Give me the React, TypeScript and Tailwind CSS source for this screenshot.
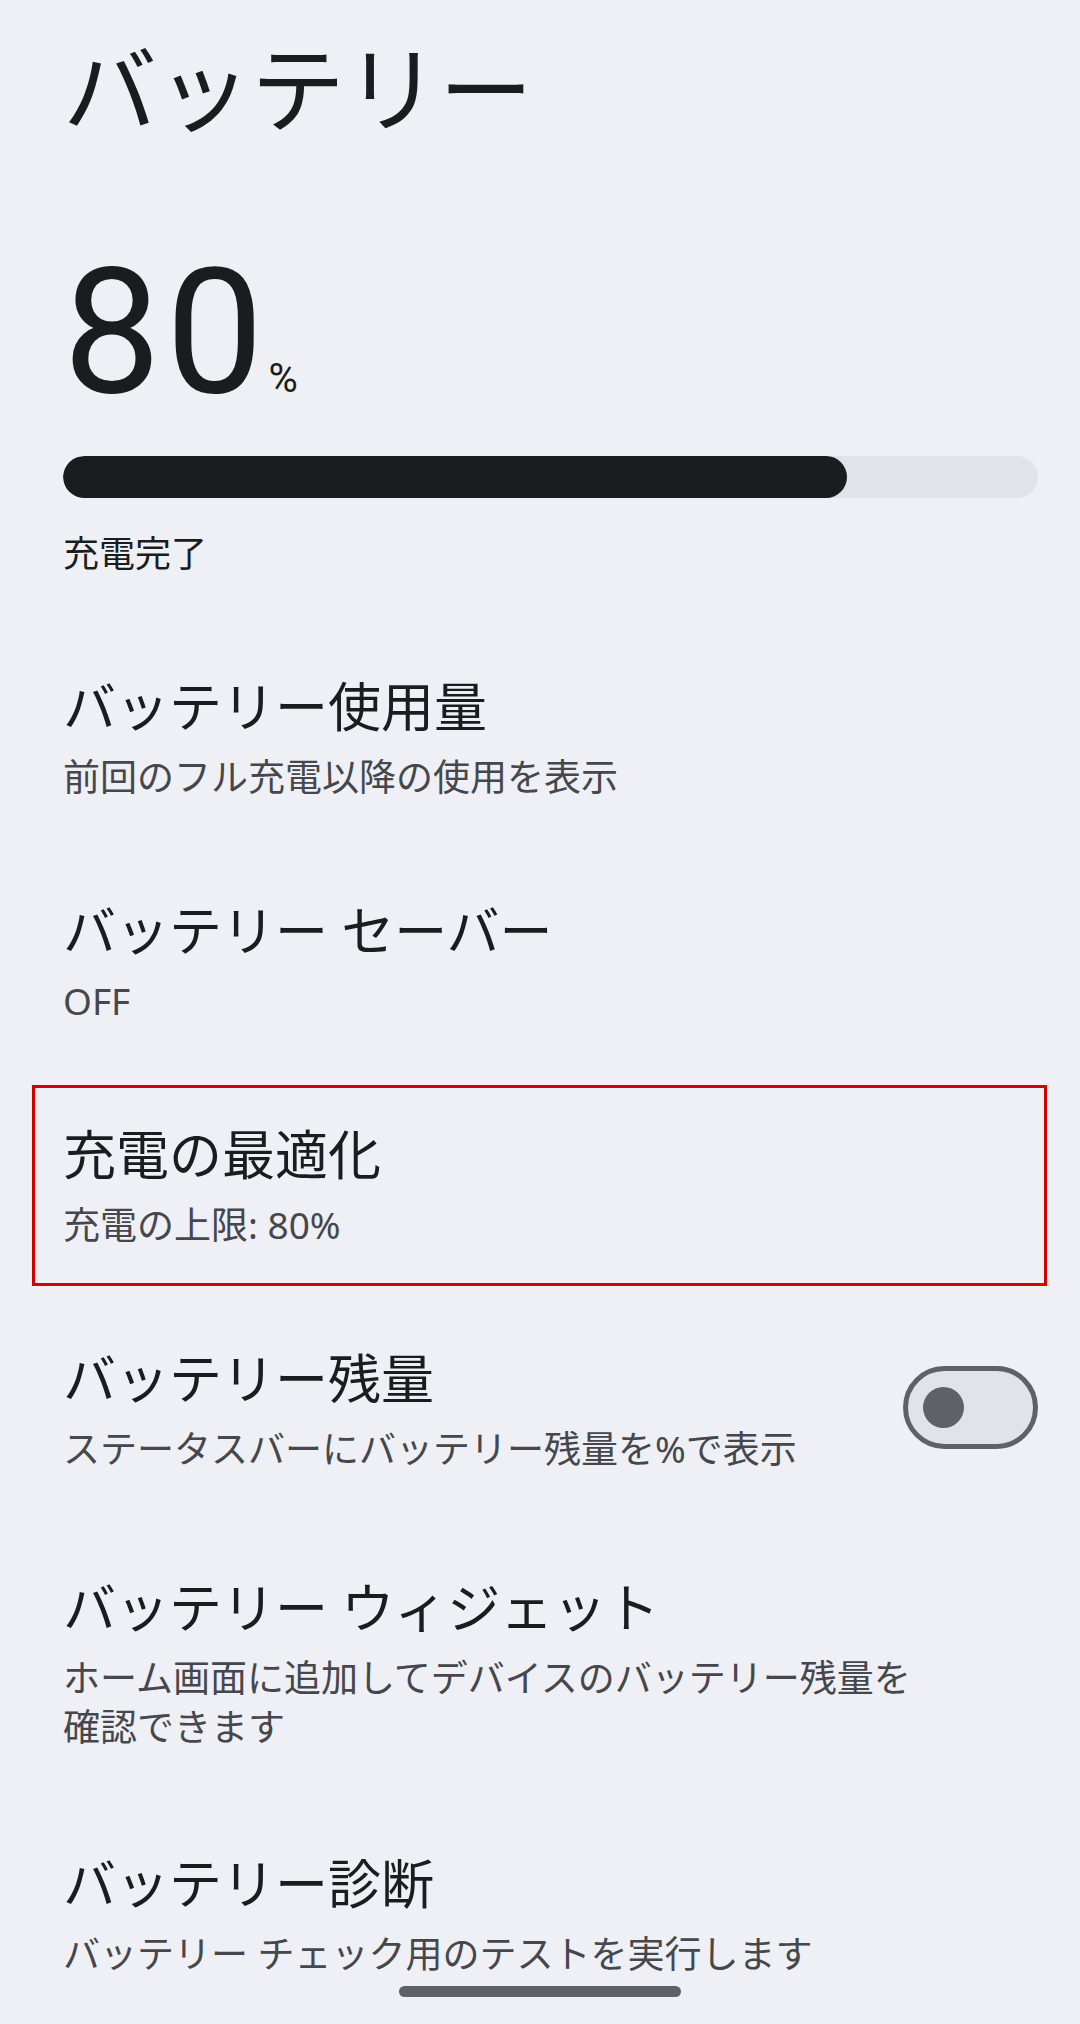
import React from "react";

const F = { fontFamily: '"Roboto", "Noto Sans CJK JP", sans-serif' };
const FN = { fontFamily: '"Noto Sans", "Noto Sans CJK JP", sans-serif' };

function Item({
  title,
  sub,
  right,
  extra = "",
}: {
  title: string;
  sub: React.ReactNode;
  right?: React.ReactNode;
  extra?: string;
}) {
  return (
    <div className={`flex items-center pl-[63px] pr-[42px] py-[47px] ${extra}`}>
      <div className="flex-1 min-w-0">
        <div className="text-[53px] leading-[70px] text-[#1b1c20]">{title}</div>
        <div className="mt-[8px] mb-[3px] text-[37px] leading-[49px] text-[#46474d]" style={FN}>
          {sub}
        </div>
      </div>
      {right}
    </div>
  );
}

export default function App() {
  return (
    <div
      className="relative w-[1080px] h-[2024px] overflow-hidden bg-[#eff0f5]"
      style={F}
    >
      <div className="pt-[46px] pl-[63px] text-[94px] leading-none text-[#1b1c20]">
        バッテリー
      </div>

      <div className="mt-[106px] pl-[63px] flex items-baseline text-[#1b1c20]">
        <span className="text-[174px] leading-none tracking-[5px]">80</span>
        <span className="ml-[0px] text-[40px] leading-none">%</span>
      </div>

      <div className="mt-[36px] ml-[63px] mr-[42px] h-[42px] rounded-full bg-[#e1e2ea] overflow-hidden">
        <div className="h-full w-[784px] rounded-full bg-[#1b1c20]" />
      </div>

      <div className="mt-[33px] pl-[63px] text-[36px] leading-[49px] text-[#1b1c20]">
        充電完了
      </div>

      <div className="mt-[47px]">
        <Item title="バッテリー使用量" sub="前回のフル充電以降の使用を表示" />
        <Item title="バッテリー セーバー" sub="OFF" />
        <div className="relative">
          <Item title="充電の最適化" sub="充電の上限: 80%" />
          <div className="absolute top-[10px] bottom-[13px] left-[32px] right-[33px] border-[3px] border-[#d40000]" />
        </div>
        <Item
          title="バッテリー残量"
          sub="ステータスバーにバッテリー残量を%で表示"
          extra="pb-[52px]"
          right={
            <div className="ml-[24px] mb-[8px] flex items-center w-[135px] h-[83px] rounded-full border-[5px] border-[#606167] bg-[#e1e2ea] pl-[15px]">
              <div className="w-[41px] h-[41px] rounded-full bg-[#606167]" />
            </div>
          }
        />
        <Item
          title="バッテリー ウィジェット"
          sub={
            <>
              ホーム画面に追加してデバイスのバッテリー残量を
              <br />
              確認できます
            </>
          }
          extra="pb-[50px]"
        />
        <Item title="バッテリー診断" sub="バッテリー チェック用のテストを実行します" />
      </div>

      <div className="absolute bottom-[27px] left-1/2 -translate-x-1/2 w-[282px] h-[11px] rounded-full bg-[#606167]" />
    </div>
  );
}
